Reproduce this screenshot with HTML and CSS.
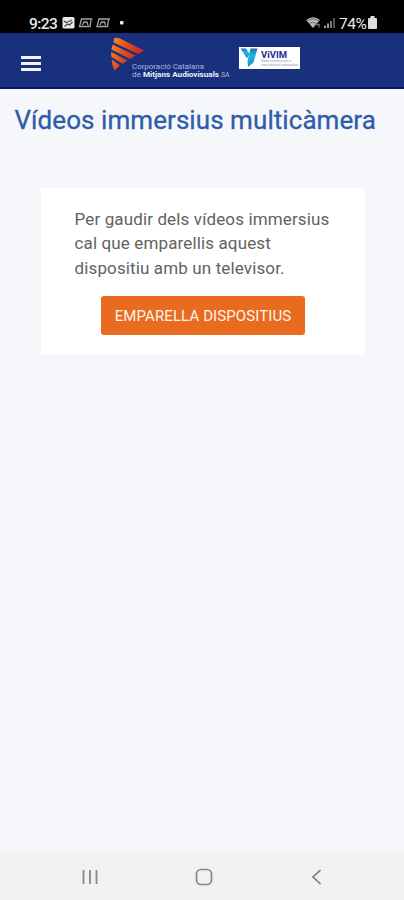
FILE: index.html
```
<!DOCTYPE html>
<html lang="ca">
<head>
<meta charset="utf-8">
<title>Vídeos immersius multicàmera</title>
<link rel="stylesheet" href="styles.css">
</head>
<body>
<div class="status">
  <span class="time">9:23</span>
  <svg class="notices" width="66" height="14" viewBox="0 0 66 14">
    <rect x="0.5" y="1" width="12" height="11.5" rx="1.5" fill="#e8e8e8"/>
    <path d="M2 5l2 1.500 3-1 3-1.500M2.500 10.500l3-2.500 2 1 3-3" fill="none" stroke="#444" stroke-width="1.200"/>
    <g fill="none" stroke="#a5a5a5" stroke-width="1.300">
      <path d="M30.500 3H19.500L17.500 10.500H28L29 4"/><path d="M20.500 9L22 6H25L26 9"/>
      <path d="M48 3H37L35 10.500H45.500L46.500 4"/><path d="M38 9L39.500 6H42.500L43.500 9"/>
    </g>
    <rect x="58" y="5" width="3.500" height="3.500" rx="1" fill="#eee"/>
  </svg>
  <svg class="signal" width="31" height="14" viewBox="0 0 31 14">
    <path d="M0 4Q7 -1.500 14 4L7 12Z" fill="#b8b8b8"/>
    <path d="M1 5Q7 .8 13 5M3.500 7.500Q7 5 10.500 7.500" fill="none" stroke="#555" stroke-width=".7"/>
    <path d="M9 8.500h4v3" fill="none" stroke="#777" stroke-width="1.300"/>
    <path d="M18 12V9.500h2V12zM21 12V7.500h2V12z" fill="#999"/>
    <path d="M24 12V5h2V12z" fill="#777"/><path d="M27 12V2h2V12z" fill="#555"/>
  </svg>
  <span class="percent">74%</span>
  <svg class="battery" width="9" height="14" viewBox="0 0 9 14"><path d="M2.500 0h4v2H8q1 0 1 1v9q0 1-1 1H1q-1 0-1-1V3q0-1 1-1h1.500z" fill="#ddd"/></svg>
</div>
<header class="header">
  <div class="menu"><i></i><i></i><i></i></div>
  <svg class="corp" width="122" height="44" viewBox="0 0 122 44">
    <defs><linearGradient id="fan" gradientUnits="userSpaceOnUse" x1="2" y1="8" x2="26" y2="18"><stop offset="0" stop-color="#ee842b"/><stop offset=".5" stop-color="#e0501f"/><stop offset="1" stop-color="#d02f20"/></linearGradient></defs>
    <g fill="url(#fan)">
      <path d="M4.500 1Q7 .3 10 1.500L34 13.500L28 17L3.500 5.500Q3.500 3 4.500 1Z"/>
      <path d="M2.800 7.500L25.500 18.500L20 22L1.500 12.500Q1.800 9.500 2.800 7.500Z"/>
      <path d="M1.300 15L17.500 23.500L12.500 26.800L1.500 20Q1 17.500 1.300 15Z"/>
      <path d="M1.700 22.500L10 28.300L4.500 33.500Q2.200 29 1.700 22.500Z"/>
    </g>
    <text x="22" y="31.500" textLength="72" lengthAdjust="spacingAndGlyphs" class="corp-light">Corporació Catalana</text>
    <text x="22" y="40" textLength="9" lengthAdjust="spacingAndGlyphs" class="corp-light">de</text>
    <text x="33" y="40" textLength="76" lengthAdjust="spacingAndGlyphs" class="corp-bold">Mitjans Audiovisuals</text>
    <text x="109.500" y="40" textLength="10" lengthAdjust="spacingAndGlyphs" class="corp-light">.SA</text>
  </svg>
  <svg class="vivim" width="61" height="22" viewBox="0 0 61 22">
    <defs><linearGradient id="cyan" x1="0" y1="0" x2="0" y2="1"><stop offset="0" stop-color="#1f6fae"/><stop offset=".35" stop-color="#22b4dc"/><stop offset="1" stop-color="#1a94d0"/></linearGradient></defs>
    <rect width="61" height="22" fill="#fff"/>
    <path d="M1.500 1.500L7 1.500L10.500 7L8 11.500Z" fill="url(#cyan)"/>
    <path d="M11.500 1.500H18.500L14.500 15.500L9 20L8.500 14Z" fill="url(#cyan)"/>
    <text x="22" y="10.500" textLength="26" lengthAdjust="spacingAndGlyphs" class="vivim-name">ViVIM</text>
    <text x="22" y="15.300" textLength="30" lengthAdjust="spacingAndGlyphs" class="vivim-sub">Vídeo immersiu per a</text>
    <text x="22" y="18.700" textLength="37" lengthAdjust="spacingAndGlyphs" class="vivim-sub">una televisió innovadora</text>
  </svg>
</header>
<main class="content">
  <h1>Vídeos immersius multicàmera</h1>
  <section class="card">
    <p>Per gaudir dels vídeos immersius<br>cal que emparellis aquest<br>dispositiu amb un televisor.</p>
    <button>EMPARELLA DISPOSITIUS</button>
  </section>
</main>
<nav class="nav">
  <svg width="16" height="16" viewBox="0 0 16 16" fill="none" stroke="#888" stroke-width="1.800"><path d="M1.500 1v14M8 1v14M14.500 1v14"/></svg>
  <svg width="18" height="18" viewBox="0 0 18 18" fill="none" stroke="#858585" stroke-width="1.700"><rect x="1.500" y="1.500" width="15" height="15" rx="4.500"/></svg>
  <svg width="16" height="16" viewBox="0 0 16 16" fill="none" stroke="#7d7d7d" stroke-width="1.700"><path d="M11.500 1L4 8l7.500 7"/></svg>
</nav>
</body>
</html>
```
FILE: styles.css
```
* { box-sizing: border-box; }
body {
  margin: 0;
  width: 404px;
  height: 900px;
  display: flex;
  flex-direction: column;
  overflow: hidden;
  background: #f5f7fb;
  font-family: Roboto, sans-serif;
}
svg { display: block; flex: none; }
.status {
  height: 33px;
  padding: 14px 27px 0 29px;
  display: flex;
  align-items: flex-start;
  background: #000;
  color: #e9e9e9;
  font-size: 15.5px;
  line-height: 20px;
}
.time { width: 33px; letter-spacing: -0.6px; font-weight: 500; }
.notices { margin-top: 2px; }
.signal { margin: 2px 2px 0 auto; }
.percent { width: 29px; letter-spacing: -0.4px; }
.battery { margin-top: 2px; }
.header {
  height: 56px;
  display: flex;
  align-items: flex-start;
  padding: 4px 0 0 21px;
  background: #19317d;
  border-bottom: 2px solid #0b1278;
}
.menu {
  width: 20px;
  margin-top: 19px;
  display: flex;
  flex-direction: column;
  gap: 3px;
}
.menu i { height: 3px; background: #f1f2fc; }
.corp { margin-left: 69px; }
.corp-light { font: 7px Roboto, sans-serif; fill: #a9b8dc; }
.corp-bold { font: 700 7px Roboto, sans-serif; fill: #e9efff; }
.vivim { margin: 10px 0 0 7px; }
.vivim-name { font: 700 9.5px Roboto, sans-serif; fill: #28288c; }
.vivim-sub { font: 3.2px Roboto, sans-serif; fill: #8796b7; }
.content { flex: 1; padding: 14px 39px 0 41px; }
h1 {
  margin: 0 -39px 50px -26.500px;
  color: #2d5ca8;
  font-size: 26px;
  line-height: 35px;
  font-weight: 400;
  letter-spacing: 0.06px;
  -webkit-text-stroke: 0.3px #2d5ca8;
  white-space: nowrap;
}
.card {
  height: 167px;
  padding: 19px 0 0 33.500px;
  background: #fff;
}
.card p {
  margin: 0;
  color: #626262;
  font-size: 17px;
  line-height: 24.4px;
  letter-spacing: 0.13px;
  white-space: nowrap;
}
button {
  display: block;
  width: 204px;
  height: 39px;
  margin: 16px 0 0 26.500px;
  padding: 0;
  border: 0;
  border-radius: 3px;
  background: #e96b20;
  color: #fff4eb;
  font: 15px Roboto, sans-serif;
  letter-spacing: 0.1px;
  white-space: nowrap;
}
.nav {
  height: 47px;
  padding: 1px 79px 0 82px;
  display: flex;
  align-items: center;
  justify-content: space-between;
  background: #f1f1f1;
}
```
